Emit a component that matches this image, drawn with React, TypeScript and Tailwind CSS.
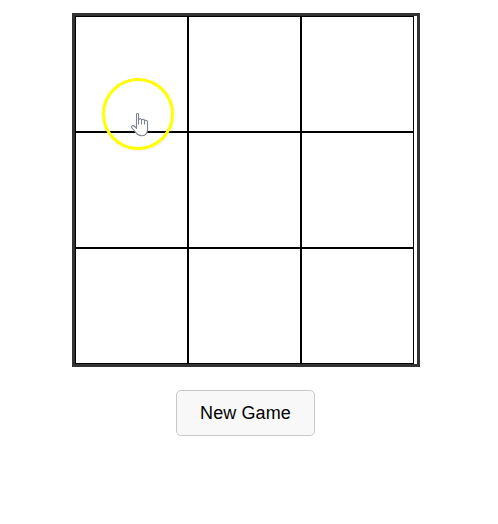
const cells = Array.from({ length: 9 }, (_, i) => i);

function Pointer() {
  return (
    <div className="pointer-events-none absolute left-[102px] top-[78px] size-[72px] rounded-full border-3 border-[#ffff00] shadow-[1px_1px_3px_rgba(0,0,0,0.07)]">
      <svg
        className="absolute left-[26px] top-[31px]"
        width="18"
        height="25"
        viewBox="0 0 18 25"
        fill="#fff"
        stroke="#7c838f"
        strokeWidth="1.1"
        strokeLinejoin="round"
        strokeLinecap="round"
      >
        <path d="M5.5 16.5V2.3Q5.5 1.5 6.5 1.5T7.5 2.3V7.5Q9.8 5.8 10.5 7.8Q12.8 6.3 13.5 8.5Q16.5 7.7 16.5 10V18Q16 23.8 10.5 23.8Q6.8 23.5 4.8 20.5L1 16Q.2 14.6 1.4 13.8Q3 13 5.5 16.5" />
        <path d="M7.5 6.5V12M10.5 7.5V12M13.5 8.3V12" fill="none" />
      </svg>
    </div>
  );
}

export default function App() {
  return (
    <main className="relative flex h-[524px] w-[498px] flex-col items-center bg-white pr-[6px] pt-[13px] font-['Liberation_Sans',Arial,sans-serif]">
      <div className="h-[354px] w-[348px] border-3 border-[#333333]">
        <div className="grid w-[339px] grid-cols-3">
          {cells.map((cell) => (
            <div key={cell} className="h-[116px] border border-black" />
          ))}
        </div>
      </div>
      <button
        type="button"
        className="mr-px mt-[23px] flex h-[46px] w-[139px] items-center justify-center rounded-[5px] border border-[#c8c8c8] bg-[#f8f8f8] text-[18px] tracking-[0.1px] text-black"
      >
        New Game
      </button>
      <Pointer />
    </main>
  );
}
